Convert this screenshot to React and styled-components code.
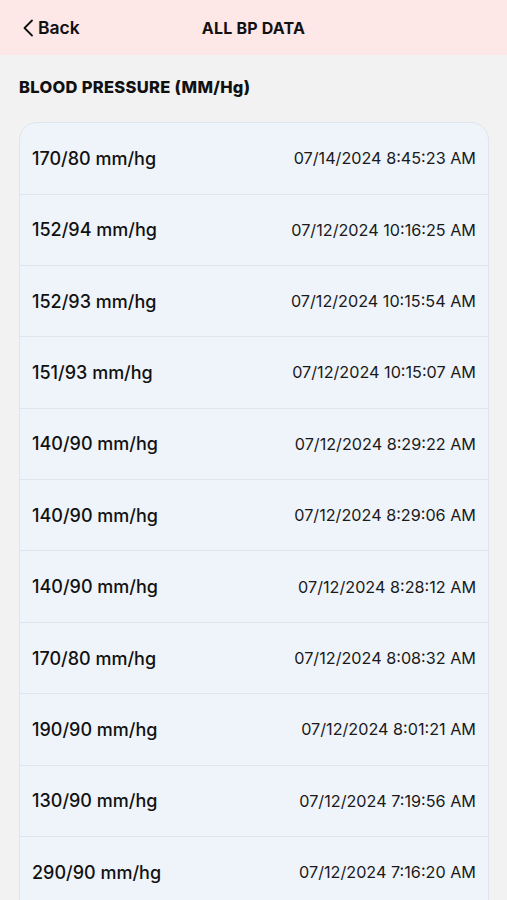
import React from "react";
import styled, { createGlobalStyle } from "styled-components";

const readings = [
  { value: "170/80 mm/hg", time: "07/14/2024 8:45:23 AM" },
  { value: "152/94 mm/hg", time: "07/12/2024 10:16:25 AM" },
  { value: "152/93 mm/hg", time: "07/12/2024 10:15:54 AM" },
  { value: "151/93 mm/hg", time: "07/12/2024 10:15:07 AM" },
  { value: "140/90 mm/hg", time: "07/12/2024 8:29:22 AM" },
  { value: "140/90 mm/hg", time: "07/12/2024 8:29:06 AM" },
  { value: "140/90 mm/hg", time: "07/12/2024 8:28:12 AM" },
  { value: "170/80 mm/hg", time: "07/12/2024 8:08:32 AM" },
  { value: "190/90 mm/hg", time: "07/12/2024 8:01:21 AM" },
  { value: "130/90 mm/hg", time: "07/12/2024 7:19:56 AM" },
  { value: "290/90 mm/hg", time: "07/12/2024 7:16:20 AM" },
];

const App = () => {
  return (
    <Page>
      <GlobalStyle />
      <Header>
        <BackButton>
          <svg width="12" height="18" viewBox="0 0 12 18" fill="none">
            <path
              d="M10 1.5L2.5 9L10 16.5"
              stroke="#111"
              strokeWidth="1.8"
              strokeLinecap="round"
              strokeLinejoin="round"
            />
          </svg>
          Back
        </BackButton>
        <Title>ALL BP DATA</Title>
      </Header>
      <Content>
        <SectionTitle>BLOOD PRESSURE (MM/Hg)</SectionTitle>
        <Card>
          {readings.map((r, i) => (
            <Row key={i}>
              <Value>{r.value}</Value>
              <Time>{r.time}</Time>
            </Row>
          ))}
        </Card>
      </Content>
    </Page>
  );
};

export default App;

const GlobalStyle = createGlobalStyle`
  html, body {
    margin: 0;
    padding: 0;
    background: #f2f2f2;
    overflow: hidden;
  }
  * {
    box-sizing: border-box;
  }
`;

const Page = styled.div`
  width: 507px;
  height: 900px;
  overflow: hidden;
  background: #f2f2f2;
  font-family: "Inter", "Noto Sans", sans-serif;
  color: #111;
`;

const Header = styled.div`
  position: relative;
  height: 55px;
  background: #fde7e7;
  display: flex;
  align-items: center;
  justify-content: center;
`;

const BackButton = styled.div`
  position: absolute;
  left: 22px;
  top: 0;
  bottom: 0;
  display: flex;
  align-items: center;
  gap: 4px;
  font-size: 17.5px;
  font-weight: 600;
`;

const Title = styled.div`
  font-size: 16px;
  font-weight: 700;
  letter-spacing: 0.2px;
`;

const Content = styled.div`
  padding: 22px 18px 0 19px;
`;

const SectionTitle = styled.div`
  font-size: 16.5px;
  font-weight: 800;
  letter-spacing: 0.3px;
  line-height: 20px;
  margin-bottom: 25px;
`;

const Card = styled.div`
  background: #eff4fa;
  border: 1px solid #dfe5ec;
  border-radius: 18px;
  overflow: hidden;
  padding-bottom: 40px;
`;

const Row = styled.div`
  height: 71.4px;
  display: flex;
  align-items: center;
  justify-content: space-between;
  padding: 0 12px 0 12px;
  border-top: 1.5px solid #dfe5ec;
  &:first-child {
    border-top: none;
    height: 70.5px;
  }
`;

const Value = styled.span`
  font-size: 18px;
  font-weight: 500;
`;

const Time = styled.span`
  font-size: 16.2px;
  font-weight: 400;
  color: #1a1a1a;
`;
